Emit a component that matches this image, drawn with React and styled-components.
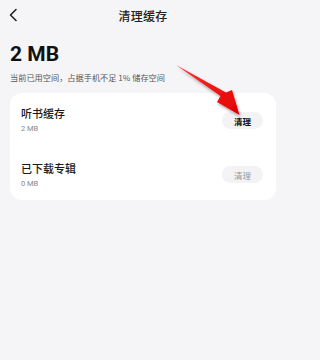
import React from "react";
import styled, { createGlobalStyle } from "styled-components";

const Global = createGlobalStyle`
  html, body { margin: 0; padding: 0; background: #f5f5f7; }
  body { font-family: "Noto Sans CJK SC", "Noto Sans", sans-serif; }
`;

const Page = styled.div`
  position: relative;
  width: 285px;
  height: 360px;
  background: #f5f5f7;
  box-sizing: border-box;
  padding: 0 9px 0 10px;
  overflow: hidden;
`;

const Header = styled.div`
  height: 30px;
  display: flex;
  align-items: center;
  justify-content: center;
  position: relative;
`;

const Back = styled.div`
  position: absolute;
  left: -2px;
  top: 8px;
  width: 12px;
  height: 14px;
  display: flex;
`;

const Title = styled.div`
  font-size: 12px;
  font-weight: 500;
  color: #222;
  letter-spacing: 0.3px;
`;

const Size = styled.div`
  margin-top: 12px;
  font-family: "Roboto", "Noto Sans", sans-serif;
  font-weight: 700;
  font-size: 21px;
  line-height: 24px;
  color: #111;
`;

const Sub = styled.div`
  margin-top: 5px;
  font-size: 8.2px;
  line-height: 12px;
  color: #555;
`;

const Card = styled.div`
  margin-top: 10px;
  background: #fff;
  border-radius: 12px;
  padding: 12px 13px 11px 11px;
  display: flex;
  flex-direction: column;
`;

const Row = styled.div`
  display: flex;
  align-items: flex-start;
  justify-content: space-between;
  height: ${p => p.$h}px;
`;

const Info = styled.div`
  display: flex;
  flex-direction: column;
`;

const Name = styled.div`
  font-size: 11px;
  line-height: 16px;
  font-weight: 500;
  color: #1a1a1a;
`;

const Meta = styled.div`
  margin-top: 3px;
  font-family: "Roboto", "Noto Sans", sans-serif;
  font-size: 7.5px;
  line-height: 10px;
  color: #888;
`;

const Btn = styled.div`
  width: 41px;
  height: 17px;
  border-radius: 9px;
  background: #f3f3f5;
  display: flex;
  align-items: center;
  justify-content: center;
  font-size: 8.5px;
  font-weight: ${p => (p.$active ? 700 : 400)};
  color: ${p => (p.$active ? "#111" : "#999")};
  margin-top: ${p => p.$mt}px;
`;

const Overlay = styled.svg`
  position: absolute;
  left: 0;
  top: 0;
  pointer-events: none;
`;

export default function App() {
  return (
    <>
      <Global />
      <Page>
        <Header>
          <Back>
            <svg width="12" height="14" viewBox="0 0 12 14">
              <path d="M8 1.5 L2.5 7 L8 12.5" fill="none" stroke="#222" strokeWidth="1.6" strokeLinecap="round" strokeLinejoin="round" />
            </svg>
          </Back>
          <Title>清理缓存</Title>
        </Header>
        <Size>2 MB</Size>
        <Sub>当前已用空间，占据手机不足 1% 储存空间</Sub>
        <Card>
          <Row $h={55}>
            <Info>
              <Name>听书缓存</Name>
              <Meta>2 MB</Meta>
            </Info>
            <Btn $active $mt={7}>清理</Btn>
          </Row>
          <Row $h={29}>
            <Info>
              <Name>已下载专辑</Name>
              <Meta>0 MB</Meta>
            </Info>
            <Btn $mt={6}>清理</Btn>
          </Row>
        </Card>
        <Overlay width="285" height="360" viewBox="0 0 285 360">
          <defs>
            <filter id="sh" x="-20%" y="-20%" width="140%" height="140%">
              <feDropShadow dx="1" dy="2" stdDeviation="1.5" floodColor="#000" floodOpacity="0.35" />
            </filter>
            <linearGradient id="ag" x1="0" y1="0" x2="1" y2="1">
              <stop offset="0" stopColor="#ff3030" />
              <stop offset="1" stopColor="#e00000" />
            </linearGradient>
          </defs>
          <polygon
            points="176,65 220.5,96 217,102 239.5,115 232,90 226,92.5"
            fill="url(#ag)"
            filter="url(#sh)"
          />
        </Overlay>
      </Page>
    </>
  );
}
